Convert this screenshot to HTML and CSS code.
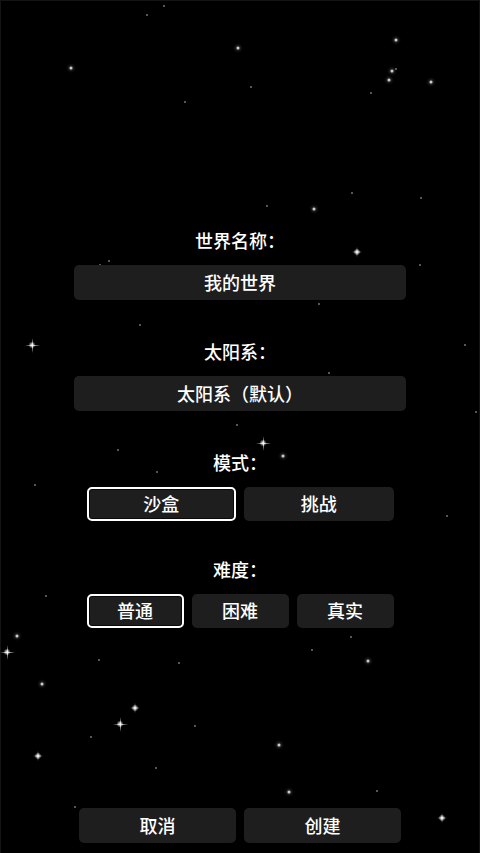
FILE: index.html
```html
<!DOCTYPE html>
<html lang="zh-CN">
<head>
<meta charset="utf-8">
<title>创建世界</title>
<link rel="stylesheet" href="styles.css">
</head>
<body>
<div class="screen">
  <div class="sky" aria-hidden="true">
    <span class="star s" style="left:163px;top:5px"></span>
    <span class="star s" style="left:146px;top:14px"></span>
    <span class="star m" style="left:237px;top:47px"></span>
    <span class="star m" style="left:70px;top:67px"></span>
    <span class="star m" style="left:395px;top:39px"></span>
    <span class="star m" style="left:391px;top:70px"></span>
    <span class="star s" style="left:395px;top:68px"></span>
    <span class="star m" style="left:388px;top:79px"></span>
    <span class="star m" style="left:430px;top:81px"></span>
    <span class="star s" style="left:370px;top:92px"></span>
    <span class="star s" style="left:250px;top:86px"></span>
    <span class="star s" style="left:184px;top:101px"></span>
    <span class="star s" style="left:351px;top:192px"></span>
    <span class="star s" style="left:266px;top:205px"></span>
    <span class="star m" style="left:313px;top:208px"></span>
    <span class="star s" style="left:420px;top:197px"></span>
    <span class="spark sm" style="left:356px;top:251px"></span>
    <span class="star s" style="left:108px;top:260px"></span>
    <span class="star s" style="left:99px;top:264px"></span>
    <span class="star s" style="left:419px;top:264px"></span>
    <span class="star s" style="left:318px;top:303px"></span>
    <span class="star s" style="left:139px;top:324px"></span>
    <span class="star s" style="left:328px;top:372px"></span>
    <span class="spark" style="left:31px;top:344px"></span>
    <span class="star s" style="left:464px;top:344px"></span>
    <span class="star s" style="left:475px;top:411px"></span>
    <span class="star s" style="left:236px;top:424px"></span>
    <span class="spark" style="left:262px;top:442px"></span>
    <span class="star s" style="left:117px;top:449px"></span>
    <span class="star m" style="left:282px;top:455px"></span>
    <span class="star s" style="left:156px;top:471px"></span>
    <span class="star s" style="left:34px;top:484px"></span>
    <span class="star s" style="left:446px;top:515px"></span>
    <span class="star s" style="left:45px;top:595px"></span>
    <span class="star m" style="left:16px;top:635px"></span>
    <span class="star s" style="left:350px;top:636px"></span>
    <span class="spark" style="left:6px;top:651px"></span>
    <span class="star s" style="left:311px;top:649px"></span>
    <span class="star s" style="left:98px;top:659px"></span>
    <span class="star s" style="left:178px;top:662px"></span>
    <span class="star m" style="left:367px;top:660px"></span>
    <span class="star m" style="left:41px;top:683px"></span>
    <span class="spark sm" style="left:134px;top:707px"></span>
    <span class="spark" style="left:119px;top:723px"></span>
    <span class="star s" style="left:194px;top:725px"></span>
    <span class="star s" style="left:90px;top:736px"></span>
    <span class="spark sm" style="left:37px;top:755px"></span>
    <span class="star m" style="left:278px;top:744px"></span>
    <span class="star s" style="left:155px;top:767px"></span>
    <span class="star m" style="left:288px;top:791px"></span>
    <span class="star s" style="left:376px;top:790px"></span>
    <span class="star s" style="left:74px;top:806px"></span>
    <span class="spark sm" style="left:441px;top:817px"></span>
  </div>

  <main class="form">
    <section class="field">
      <div class="field-label">世界名称：</div>
      <div class="input">我的世界</div>
    </section>
    <section class="field">
      <div class="field-label">太阳系：</div>
      <div class="input">太阳系（默认）</div>
    </section>
    <section class="field">
      <div class="field-label">模式：</div>
      <div class="choices two">
        <button class="choice selected">沙盒</button>
        <button class="choice">挑战</button>
      </div>
    </section>
    <section class="field field-tight">
      <div class="field-label">难度：</div>
      <div class="choices three">
        <button class="choice selected">普通</button>
        <button class="choice">困难</button>
        <button class="choice">真实</button>
      </div>
    </section>
  </main>

  <footer class="actions">
    <button class="action">取消</button>
    <button class="action">创建</button>
  </footer>
</div>
</body>
</html>
```

FILE: styles.css
```css
* { box-sizing: border-box; }

html, body {
  margin: 0;
  padding: 0;
  background: #000;
}

body {
  font-family: "Noto Sans CJK SC", "Noto Sans", sans-serif;
  color: #fff;
}

.screen {
  position: relative;
  width: 480px;
  height: 853px;
  background: #000;
  border: 1px solid #141414;
  border-bottom: none;
  display: flex;
  flex-direction: column;
  overflow: hidden;
}

.sky {
  position: absolute;
  inset: 0;
  pointer-events: none;
}

.star {
  position: absolute;
  border-radius: 50%;
  background: #fff;
  transform: translate(-50%, -50%);
}
.star.s {
  width: 2px;
  height: 2px;
  opacity: 0.45;
}
.star.m {
  width: 3px;
  height: 3px;
  opacity: 0.8;
  box-shadow: 0 0 3px 1px rgba(255,255,255,0.35);
}

.spark {
  position: absolute;
  width: 15px;
  height: 15px;
  transform: translate(-50%, -50%);
  background: radial-gradient(circle, #fff 0, rgba(255,255,255,0.6) 1.5px, rgba(255,255,255,0) 3.5px);
}
.spark::before,
.spark::after {
  content: "";
  position: absolute;
  left: 50%;
  top: 50%;
  transform: translate(-50%, -50%);
}
.spark::before {
  width: 100%;
  height: 1px;
  background: linear-gradient(to right, rgba(255,255,255,0), rgba(255,255,255,0.9), rgba(255,255,255,0));
}
.spark::after {
  width: 1px;
  height: 100%;
  background: linear-gradient(to bottom, rgba(255,255,255,0), rgba(255,255,255,0.9), rgba(255,255,255,0));
}
.spark.sm {
  width: 10px;
  height: 10px;
}

.form {
  position: relative;
  display: flex;
  flex-direction: column;
  align-items: center;
  gap: 39px;
  padding-top: 227px;
}

.field {
  display: flex;
  flex-direction: column;
  align-items: center;
  gap: 13px;
}

.field-tight {
  margin-top: -3px;
}

.field-label {
  height: 24px;
  line-height: 24px;
  font-size: 18px;
  font-weight: 500;
}

.input {
  width: 332px;
  height: 35px;
  line-height: 35px;
  background: #1e1e1e;
  border-radius: 5px;
  text-align: center;
  font-size: 18px;
  font-weight: 500;
}

.choices {
  display: flex;
  gap: 8px;
  width: 307px;
}

.choice,
.action {
  flex: 1 1 0;
  height: 34px;
  padding: 0 0 2px;
  border: 2px solid transparent;
  border-radius: 5px;
  background: #1e1e1e;
  color: #fff;
  font-family: inherit;
  font-size: 18px;
  font-weight: 500;
  line-height: 26px;
  text-align: center;
}

.choice.selected {
  border-color: #fff;
  box-shadow: inset 0 0 0 1px #0a0a0a;
}

.actions {
  position: relative;
  margin-top: auto;
  margin-bottom: 10px;
  align-self: center;
  display: flex;
  gap: 8px;
  width: 322px;
}

.action {
  height: 35px;
  padding-bottom: 1px;
  line-height: 28px;
}
```
